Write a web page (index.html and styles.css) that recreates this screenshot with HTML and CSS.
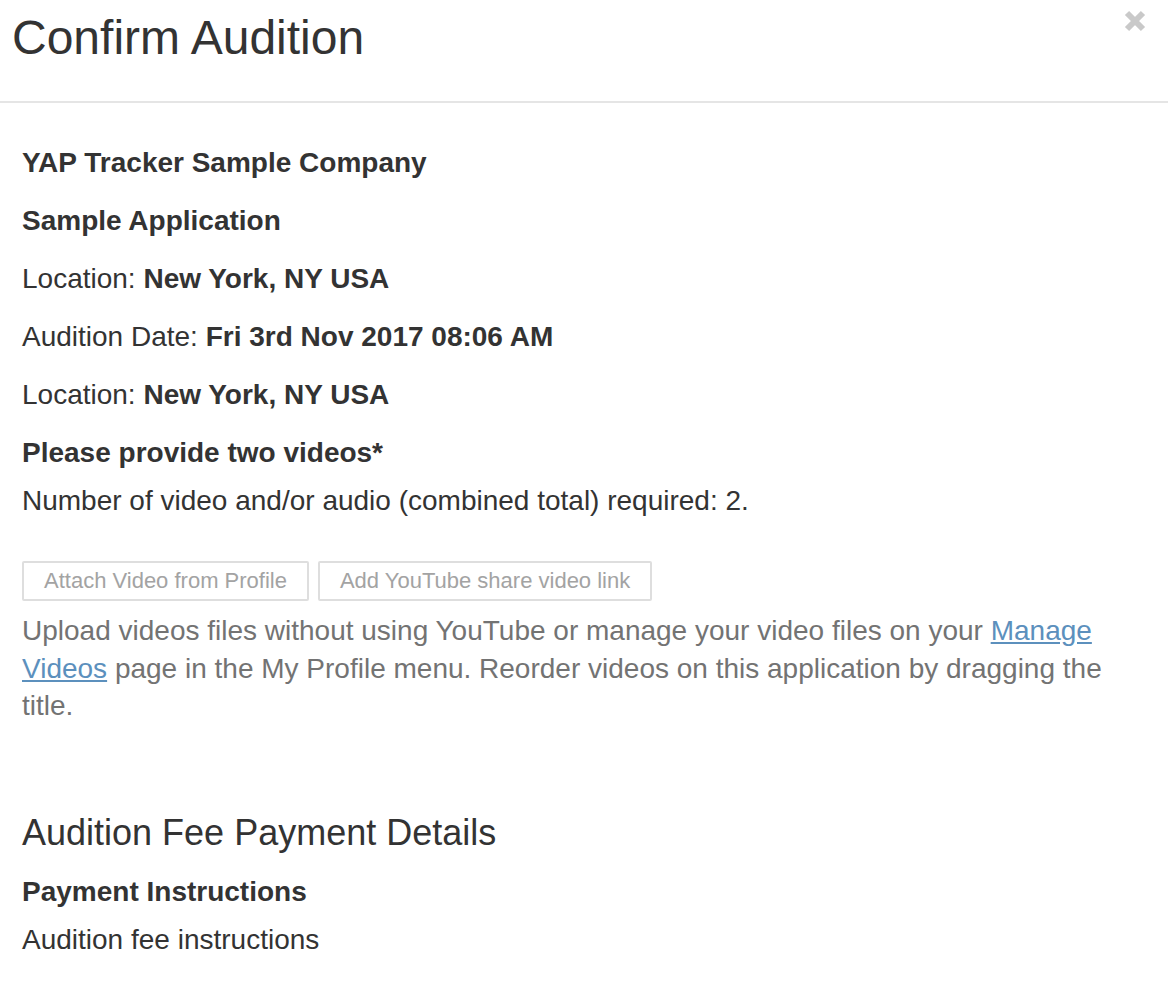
FILE: index.html
```html
<!DOCTYPE html>
<html lang="en">

<head>
    <meta charset="UTF-8">
    <meta name="viewport" content="width=device-width, initial-scale=1.0">
    <title>Confirm Audition</title>

    <link rel="stylesheet" href="styles.css">
</head>

<body>

    <div class="modal">

        <div class="modal-header">
            <h1 class="modal-title">Confirm Audition</h1>
            <button class="close" type="button" aria-label="Close">
                <svg width="24" height="22" viewBox="0 0 24 22">
                    <path d="M4 3 L20 19 M20 3 L4 19" stroke="#c9c9c9" stroke-width="6" fill="none" />
                </svg>
            </button>
        </div>

        <div class="modal-body">

            <p class="info"><b>YAP Tracker Sample Company</b></p>
            <p class="info"><b>Sample Application</b></p>
            <p class="info">Location: <b>New York, NY USA</b></p>
            <p class="info">Audition Date: <b>Fri 3rd Nov 2017 08:06 AM</b></p>
            <p class="info">Location: <b>New York, NY USA</b></p>

            <p class="info label"><b>Please provide two videos*</b></p>
            <p class="info">Number of video and/or audio (combined total) required: 2.</p>

            <div class="video-buttons">
                <button class="btn" type="button" disabled>Attach Video from Profile</button>
                <button class="btn" type="button" disabled>Add YouTube share video link</button>
            </div>

            <p class="help-text">Upload videos files without using YouTube or manage your video files on your <a
                    href="#">Manage Videos</a> page in the My Profile menu. Reorder videos on this application by
                dragging the title.</p>

            <h3 class="section-title">Audition Fee Payment Details</h3>

            <p class="info label"><b>Payment Instructions</b></p>
            <p class="info">Audition fee instructions</p>

        </div>

    </div>

</body>

</html>
```

FILE: styles.css
```css
*,
*::before,
*::after {
    margin: 0;
    padding: 0;
    box-sizing: border-box;
}

body {
    font-family: "Liberation Sans", Arial, sans-serif;
    color: #333;
    background-color: #fff;
}

.modal {
    width: 100%;
}

.modal-header {
    display: flex;
    justify-content: space-between;
    align-items: flex-start;
    height: 103px;
    padding: 10px 21px 0 12px;
    border-bottom: 2px solid #e5e5e5;
}

.modal-title {
    font-size: 48px;
    font-weight: normal;
    line-height: 56px;
}

.close {
    background: transparent;
    border: 0;
    cursor: pointer;
    line-height: 0;
}

.modal-body {
    padding: 41px 22px 0 22px;
}

.info {
    font-size: 28px;
    line-height: 37px;
    margin-bottom: 21px;
}

.info.label {
    margin-bottom: 11px;
}

.video-buttons {
    display: flex;
    gap: 9px;
    margin-top: 42px;
}

.btn {
    height: 40px;
    padding: 0 20px;
    font-family: inherit;
    font-size: 22px;
    color: #a3a3a3;
    background-color: #fff;
    border: 2px solid #dedede;
    border-radius: 2px;
}

.help-text {
    margin-top: 11px;
    font-size: 28px;
    line-height: 37.5px;
    color: #737373;
}

.help-text a {
    color: #5c90bd;
}

.section-title {
    margin-top: 86px;
    margin-bottom: 18px;
    font-size: 36px;
    font-weight: normal;
    line-height: 44px;
}
```
